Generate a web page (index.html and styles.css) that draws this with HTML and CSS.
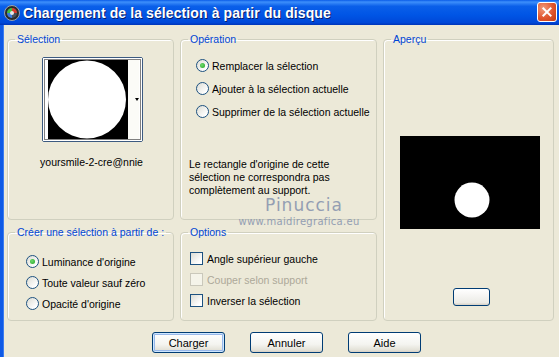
FILE: index.html
```html
<!DOCTYPE html>
<html lang="fr">
<head>
  <meta charset="UTF-8">
  <title>Chargement de la sélection à partir du disque</title>
  <link rel="stylesheet" href="styles.css">
</head>
<body>
  <div class="window">
    <div class="titlebar">
      <svg class="app-icon" width="16" height="16" viewBox="0 0 16 16">
        <circle cx="8" cy="8" r="7.5" fill="#2b2b2b" stroke="#9aa4b0"/>
        <circle cx="8" cy="8" r="5" fill="#46505a"/>
        <path d="M3 8 A5 5 0 0 1 8 3 L8 8 Z" fill="#3fbf3f"/>
        <path d="M8 3 A5 5 0 0 1 13 8 L8 8 Z" fill="#d83a2a"/>
        <path d="M8 13 A5 5 0 0 1 3 8 L8 8 Z" fill="#3a7ae0"/>
        <circle cx="8" cy="8" r="2" fill="#e8e8e8"/>
      </svg>
      <span class="title">Chargement de la sélection à partir du disque</span>
      <span class="close">
        <svg width="20" height="20" viewBox="0 0 20 20">
          <path d="M6 6 L14 14 M14 6 L6 14" stroke="#fff" stroke-width="2.2" stroke-linecap="square"/>
        </svg>
      </span>
    </div>

    <div class="client">
      <div class="groups">
        <fieldset class="group sel">
          <legend>Sélection</legend>
          <div class="thumb">
            <svg width="99" height="83" viewBox="0 0 99 83">
              <rect x="0" y="0" width="99" height="83" fill="#fff"/>
              <rect x="5" y="2" width="80" height="79" fill="#000"/>
              <circle cx="44" cy="41.5" r="39" fill="#fff"/>
              <rect x="85" y="2" width="11" height="79" fill="#fbfbf7"/>
              <path d="M92 40 L96 40 L94 43 Z" fill="#000"/>
              <rect x="1.5" y="1.5" width="96" height="80" fill="none" stroke="#000" stroke-dasharray="1 1"/>
            </svg>
          </div>
          <div class="thumb-name">yoursmile-2-cre@nnie</div>
        </fieldset>

        <fieldset class="group op">
          <legend>Opération</legend>
          <ul class="choices">
            <li><span class="radio on"></span>Remplacer la sélection</li>
            <li><span class="radio"></span>Ajouter à la sélection actuelle</li>
            <li><span class="radio"></span>Supprimer de la sélection actuelle</li>
          </ul>
          <p class="note">Le rectangle d'origine de cette sélection ne correspondra pas complètement au support.</p>
        </fieldset>

        <fieldset class="group preview">
          <legend>Aperçu</legend>
          <div class="preview-box">
            <svg width="140" height="93" viewBox="0 0 140 93">
              <rect width="140" height="93" fill="#000"/>
              <circle cx="72" cy="64" r="17.5" fill="#fff"/>
            </svg>
          </div>
          <span class="mini-btn"></span>
        </fieldset>

        <fieldset class="group create">
          <legend>Créer une sélection à partir de :</legend>
          <ul class="choices">
            <li><span class="radio on"></span>Luminance d'origine</li>
            <li><span class="radio"></span>Toute valeur sauf zéro</li>
            <li><span class="radio"></span>Opacité d'origine</li>
          </ul>
        </fieldset>

        <fieldset class="group opts">
          <legend>Options</legend>
          <ul class="choices">
            <li><span class="check"></span>Angle supérieur gauche</li>
            <li class="disabled"><span class="check"></span>Couper selon support</li>
            <li><span class="check"></span>Inverser la sélection</li>
          </ul>
        </fieldset>
      </div>

      <div class="actions">
        <button class="btn default">Charger</button>
        <button class="btn">Annuler</button>
        <button class="btn">Aide</button>
      </div>

      <div class="watermark">
        <div class="wm-name">Pinuccia</div>
        <div class="wm-site">www.maidiregrafica.eu</div>
      </div>
    </div>
  </div>
</body>
</html>
```

FILE: styles.css
```css
body {
  margin: 0;
  padding: 0;
  background: #ece9d8;
  font-family: 'Liberation Sans', Arial, sans-serif;
  font-size: 10.5px;
  color: #000;
}

.window {
  width: 559px;
  height: 357px;
  overflow: hidden;
  background: #ece9d8;
}

/* barre de titre */
.titlebar {
  height: 25px;
  display: flex;
  align-items: center;
  background: linear-gradient(#0a5ce8 0%, #3d8ffb 8%, #0a5fe9 25%, #0055e5 60%, #0048d8 90%, #0035b8 100%);
  color: #fff;
  position: relative;
}

.app-icon {
  margin-left: 4px;
  margin-right: 3px;
}

.title {
  font-weight: bold;
  font-size: 14px;
  letter-spacing: 0.1px;
  text-shadow: 1px 1px 0 #0a1e6a;
}

.close {
  position: absolute;
  right: 2px;
  top: 2px;
  width: 20px;
  height: 20px;
  border: 1px solid #fff;
  border-radius: 3px;
  box-sizing: border-box;
  background: radial-gradient(circle at 30% 30%, #f09a7a, #e0552e 55%, #c23c12);
  display: flex;
  align-items: center;
  justify-content: center;
}

.close svg {
  width: 18px;
  height: 18px;
}

.client {
  position: relative;
  height: 332px;
  border-left: 3px solid #0f5ae6;
  box-shadow: inset 1px 0 0 #3c7cf0;
}

.groups {
  display: grid;
  grid-template-columns: 167px 197px 171px;
  grid-template-rows: 187px 95px;
  column-gap: 6px;
  row-gap: 6px;
  padding: 8px 0 0 4px;
}

.group {
  margin: 0;
  padding: 0;
  min-width: 0;
  border: 1px solid #d0d0bf;
  border-radius: 4px;
  box-shadow: inset 1px 1px 0 #fff;
}

.group legend {
  color: #0046d5;
  font-size: 10.5px;
  line-height: 13px;
  padding: 0 2px;
  margin-left: 7px;
  white-space: nowrap;
}

.preview {
  grid-column: 3;
  grid-row: 1 / span 2;
}

/* Sélection */
.thumb {
  width: 99px;
  height: 83px;
  margin: 11px 0 0 34px;
  border: 1px solid #3c5a80;
  border-radius: 2px;
}

.thumb svg {
  display: block;
}

.thumb-name {
  margin-top: 14px;
  text-align: center;
  padding-left: 2px;
}

/* listes d'options */
.choices {
  list-style: none;
  margin: 0;
  padding: 0;
}

.choices li {
  display: flex;
  align-items: center;
  height: 21px;
  white-space: nowrap;
}

.op .choices {
  padding: 9px 0 0 15px;
}

.op .choices li {
  margin-bottom: 2px;
}

.create .choices {
  padding: 12px 0 0 18px;
}

.opts .choices {
  padding: 9px 0 0 9px;
}

.radio,
.check {
  width: 13px;
  height: 13px;
  box-sizing: border-box;
  border: 1px solid #1c5180;
  background: linear-gradient(135deg, #dcdcd4, #fff 80%);
  margin-right: 3px;
  position: relative;
  flex: none;
}

.radio {
  border-radius: 50%;
}

.radio.on::after {
  content: '';
  position: absolute;
  left: 3px;
  top: 3px;
  width: 5px;
  height: 5px;
  border-radius: 50%;
  background: radial-gradient(circle at 40% 40%, #6fdb6f, #21a121);
}

.check {
  margin-right: 4px;
}

.disabled {
  color: #aca899;
}

.disabled .check {
  border-color: #cac8bb;
  background: #f5f4ea;
}

.note {
  margin: 36px 0 0 8px;
  line-height: 13px;
  width: 170px;
}

/* Aperçu */
.preview-box {
  width: 140px;
  height: 93px;
  margin: 90px 0 0 16px;
}

.preview-box svg {
  display: block;
}

.mini-btn {
  display: block;
  width: 37px;
  height: 18px;
  box-sizing: border-box;
  margin: 59px 0 0 69px;
  border: 1px solid #003c74;
  border-radius: 3px;
  background: linear-gradient(#fff, #ecebe6 85%, #d6d0c5);
}

/* boutons */
.actions {
  display: flex;
  gap: 25px;
  padding: 11px 0 0 149px;
}

.btn {
  width: 73px;
  height: 21px;
  padding: 0;
  font-family: 'Liberation Sans', Arial, sans-serif;
  font-size: 11px;
  color: #000;
  border: 1px solid #003c74;
  border-radius: 3px;
  background: linear-gradient(#fff, #f4f4f0 60%, #e3e1d7 90%, #d6d0c5);
}

.btn.default {
  box-shadow: inset 0 0 0 1px #cee7ff, inset 0 0 0 2px #98b8ea;
}

.watermark {
  position: absolute;
  left: 234px;
  top: 170px;
  width: 124px;
  text-align: center;
  color: #8592ad;
  pointer-events: none;
}

.wm-name {
  font-family: 'DejaVu Sans', sans-serif;
  font-size: 17px;
  line-height: 20px;
  letter-spacing: 1px;
  padding-left: 10px;
  opacity: 0.85;
}

.wm-site {
  font-family: 'DejaVu Sans', sans-serif;
  font-size: 10px;
  line-height: 12px;
  letter-spacing: 0.3px;
  margin-top: 1px;
  opacity: 0.85;
}
```
